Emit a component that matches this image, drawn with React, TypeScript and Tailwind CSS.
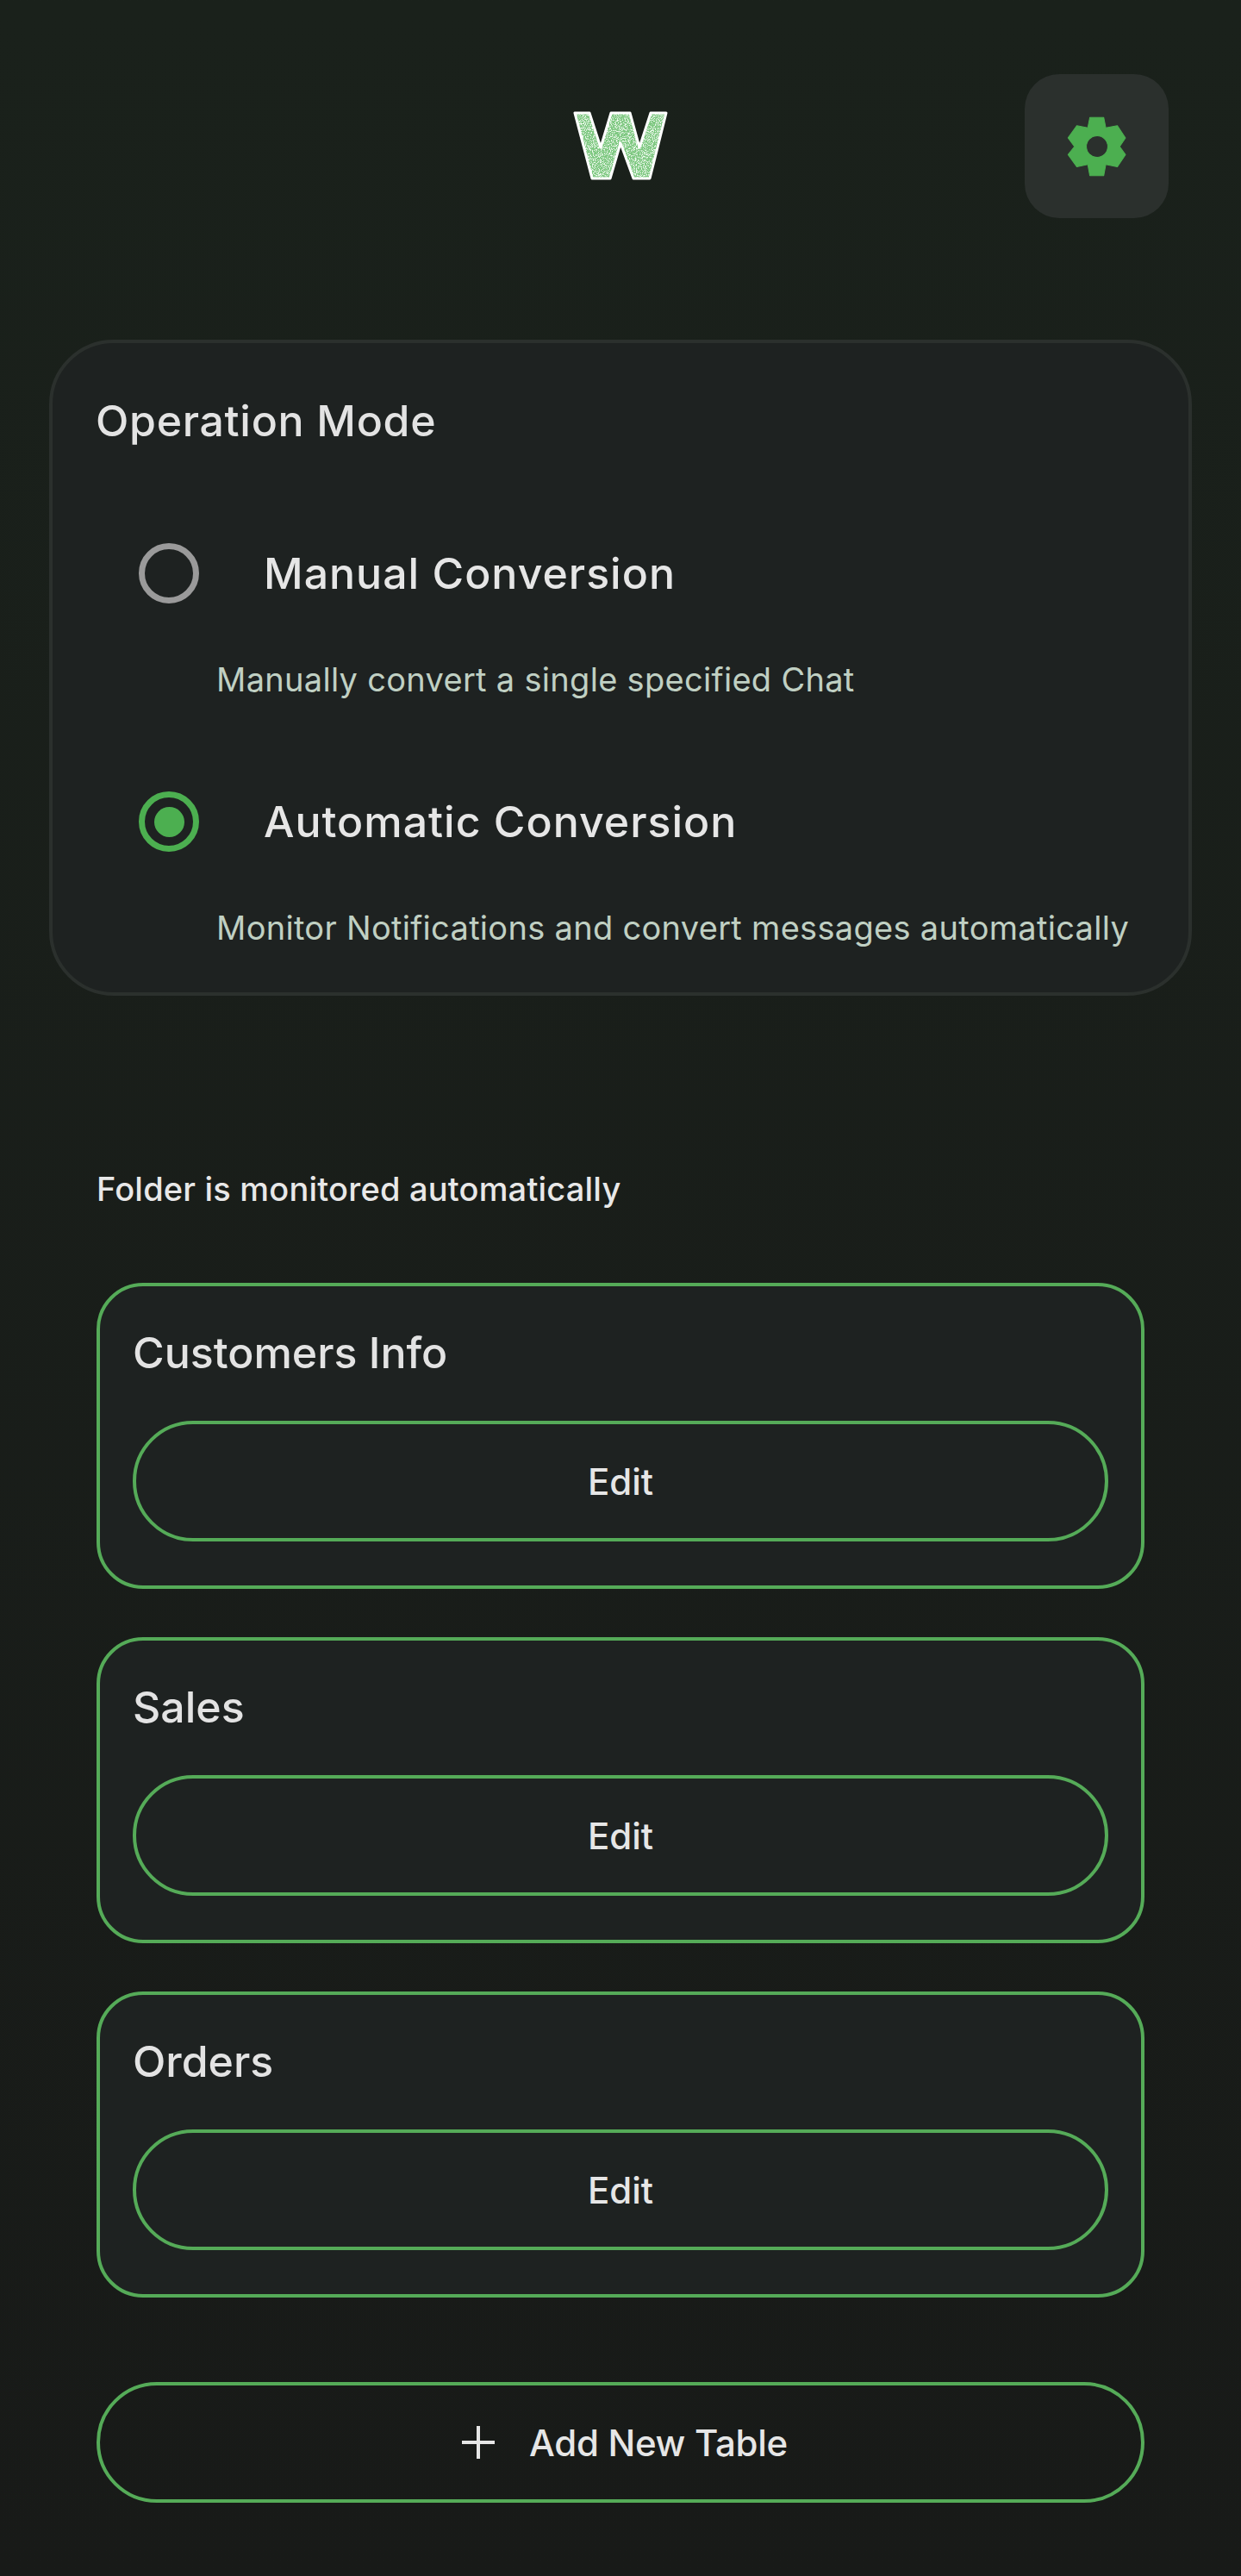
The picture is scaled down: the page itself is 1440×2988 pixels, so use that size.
const FONT = "font-['Inter','Noto_Sans',sans-serif]";

const LOGO_PATH = "M4 4 H21 L34 44 L46 4 H68 L79 44 L92 4 H110 L91 80 H72 L57 39 L45 80 H24 Z";

function Logo() {
  return (
    <svg width="114" height="84" viewBox="0 0 114 84" className="block">
      <defs>
        <filter id="speckle" x="0" y="0" width="100%" height="100%">
          <feTurbulence type="fractalNoise" baseFrequency="1.1" numOctaves="1" seed="4" />
          <feColorMatrix values="0 0 0 0 0.86  0 0 0 0 0.97  0 0 0 0 0.86  0 0 0 7 -3.4" />
          <feComposite in2="SourceGraphic" operator="in" />
          <feMerge>
            <feMergeNode in="SourceGraphic" />
            <feMergeNode />
          </feMerge>
        </filter>
      </defs>
      <path d={LOGO_PATH} fill="#7dc880" filter="url(#speckle)" />
      <path d={LOGO_PATH} fill="none" stroke="#ffffff" strokeWidth="3" strokeLinejoin="round" />
    </svg>
  );
}

function Gear() {
  return (
    <svg width="74" height="74" viewBox="170 160 220 220" fill="#4caf50">
      <path
        fillRule="evenodd"
        stroke="#4caf50"
        strokeWidth="3"
        strokeLinejoin="round"
        d="M255 170 H303 L310 205 L350 198 L378 240 L358 270 L378 298 L350 340 L310 332 L303 370 H255 L248 332 L210 340 L180 298 L202 270 L180 240 L210 198 L248 205 Z M280 233 a37 37 0 1 0 0 74 a37 37 0 1 0 0 -74 Z"
      />
    </svg>
  );
}

function Radio({ checked }: { checked?: boolean }) {
  return (
    <span
      className={
        checked
          ? "flex h-[70px] w-[70px] shrink-0 items-center justify-center rounded-full border-[7px] border-[#4caf50]"
          : "flex h-[70px] w-[70px] shrink-0 items-center justify-center rounded-full border-[7px] border-[#9a9a9a]"
      }
    >
      {checked && <span className="h-[35px] w-[35px] rounded-full bg-[#4caf50]" />}
    </span>
  );
}

function ModeOption({ title, desc, checked }: { title: string; desc: string; checked?: boolean }) {
  return (
    <div>
      <div className="flex h-[100px] items-center pl-[100px]">
        <Radio checked={checked} />
        <span className="ml-[75px] text-[50px] font-medium leading-none tracking-[1px] text-[#e6e6e6]">{title}</span>
      </div>
      <p className="mt-[48px] pl-[190px] text-[38px] leading-[50px] tracking-[0.3px] text-[#c0d0c3] whitespace-nowrap">{desc}</p>
    </div>
  );
}

function TableCard({ name }: { name: string }) {
  return (
    <div className="h-[355px] rounded-[54px] border-4 border-[#55ab58] bg-[#1e2221] px-[38px] pt-[42px]">
      <h3 className="text-[50px] font-medium leading-[70px] text-[#e3e3e3]">{name}</h3>
      <button className="mt-[44px] flex h-[140px] w-full items-center justify-center rounded-full border-4 border-[#55ab58] text-[42px] font-medium text-[#e6e6e6]">
        Edit
      </button>
    </div>
  );
}

export default function App() {
  return (
    <div className={`${FONT} h-[2988px] w-full overflow-hidden bg-gradient-to-b from-[#1a211b] to-[#181a18]`}>
      <header className="relative flex h-[394px] justify-center pt-[127px]">
        <Logo />
        <button className="absolute left-[1189px] top-[86px] flex h-[167px] w-[167px] items-center justify-center rounded-[40px] bg-[#2b302d]">
          <Gear />
        </button>
      </header>

      <section className="mx-[57px] h-[761px] rounded-[75px] border-4 border-[#2b302d] bg-[#1e2221] pt-[55px]">
        <h2 className="pl-[50px] text-[50px] font-medium leading-[70px] tracking-[0.7px] text-[#e3e3e3]">Operation Mode</h2>
        <div className="mt-[92px] flex flex-col gap-[90px]">
          <ModeOption title="Manual Conversion" desc="Manually convert a single specified Chat" />
          <ModeOption title="Automatic Conversion" desc="Monitor Notifications and convert messages automatically" checked />
        </div>
      </section>

      <section className="mt-[199px] px-[112px]">
        <p className="text-[38px] font-medium leading-[50px] tracking-[0.2px] text-[#e8e8e8]">Folder is monitored automatically</p>
        <div className="mt-[84px] flex flex-col gap-[56px]">
          <TableCard name="Customers Info" />
          <TableCard name="Sales" />
          <TableCard name="Orders" />
        </div>
        <button className="mt-[98px] flex h-[140px] w-full items-center justify-center gap-[40px] rounded-full border-4 border-[#55ab58] pl-[10px] text-[42px] font-medium tracking-[-0.3px] text-[#e6e6e6]">
          <svg width="38" height="38" viewBox="0 0 38 38" fill="none" stroke="#e6e6e6" strokeWidth="4">
            <path d="M19 0V38M0 19H38" />
          </svg>
          Add New Table
        </button>
      </section>
    </div>
  );
}
